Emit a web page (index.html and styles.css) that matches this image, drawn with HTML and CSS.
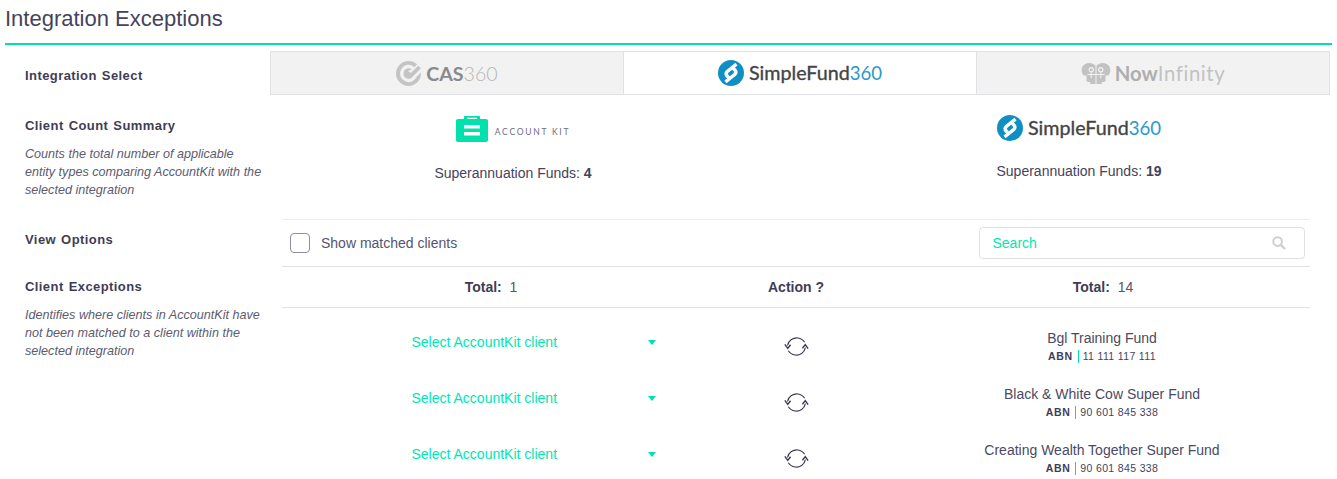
FILE: index.html
```html
<!DOCTYPE html>
<html lang="en">
<head>
<meta charset="utf-8">
<title>Integration Exceptions</title>
<link rel="stylesheet" href="styles.css">
</head>
<body>
<svg class="defs" width="0" height="0" aria-hidden="true">
  <symbol id="sf-mark" viewBox="0 0 26 26">
    <circle cx="13" cy="13" r="13" fill="#0f8fc4"/>
    <path d="M18.5 4.2 L9.3 11.4 Q7 13.8 9.3 16.3 L11.3 18.3" fill="none" stroke="#fff" stroke-width="3.4"/>
    <path d="M7.5 21.8 L16.7 14.6 Q19 12.2 16.7 9.7 L14.7 7.7" fill="none" stroke="#fff" stroke-width="3.4"/>
  </symbol>
  <symbol id="sync" viewBox="0 0 26 22">
    <path d="M3.6 9.8 C4.8 4.5 9.5 1.5 14.5 2.1 C17.5 2.5 20 4.2 21.6 6.6" fill="none" stroke="#3b3a55" stroke-width="1.2"/>
    <path d="M22.4 12.2 C21.2 17.5 16.5 20.5 11.5 19.9 C8.5 19.5 6 17.8 4.4 15.4" fill="none" stroke="#3b3a55" stroke-width="1.2"/>
    <path d="M0.8 8.8 L3.8 13 L6.8 9.2" fill="none" stroke="#3b3a55" stroke-width="1.5"/>
    <path d="M25.2 13.2 L22.2 9 L19.2 12.8" fill="none" stroke="#3b3a55" stroke-width="1.5"/>
  </symbol>
</svg>

<header class="page-head">
  <h1>Integration Exceptions</h1>
</header>

<main class="layout">
  <div class="side side-select"><h2>Integration Select</h2></div>
  <nav class="tabs">
    <a class="tab">
      <span class="logo logo-cas">
        <svg class="cas-mark" viewBox="0 0 26 26" aria-hidden="true">
          <path d="M13 0 A13 13 0 1 0 26 13 L26 12 L21.5 16.5 A9 9 0 1 1 13 4 C15.5 4 17.5 5 19 6.5 L22 3.5 C19.5 1.2 16.5 0 13 0 Z" fill="#c4c4c4"/>
          <path d="M13 7.5 A5.5 5.5 0 1 0 15.5 18 L19 14.5 L26 7.5 L23 5 L15.5 12.5 L12.5 10.5 L16.5 8.6 C15.5 7.9 14.3 7.5 13 7.5 Z" fill="#c4c4c4"/>
        </svg>
        <span class="cas-b">CAS</span><span class="cas-l">360</span>
      </span>
    </a>
    <a class="tab is-active">
      <span class="logo logo-sf">
        <svg class="sf-mark" aria-hidden="true"><use href="#sf-mark"/></svg>
        <span class="sf-text"><span class="sf-b">SimpleFund</span><span class="sf-l">360</span></span>
      </span>
    </a>
    <a class="tab">
      <span class="logo logo-ni">
        <svg class="ni-mark" viewBox="0 0 30 22" aria-hidden="true">
          <path d="M14.5 3 C13 1 10.5 0 8 0 C3.5 0 0 3 0 7.5 C0 10 1 11.5 2 13 L5 13 L5 18 C5 19 6 20 7 20 L9 20 L9 22 L14.5 22 Z" fill="#c2c2c2"/>
          <path d="M15.5 3 C17 1 19.5 0 22 0 C26.5 0 30 3 30 7.5 C30 10 29 11.5 28 13 L25 13 L25 18 C25 19 24 20 23 20 L21 20 L21 22 L15.5 22 Z" fill="#c2c2c2"/>
          <circle cx="10" cy="7" r="2.2" fill="none" stroke="#f2f2f2" stroke-width="1.2"/>
          <circle cx="20" cy="7" r="2.2" fill="none" stroke="#f2f2f2" stroke-width="1.2"/>
          <path d="M10 9 V16 M20 9 V16 M6 12 H24" stroke="#f2f2f2" stroke-width="1.1" fill="none"/>
        </svg>
        <span class="ni-b">Now</span><span class="ni-l">Infinity</span>
      </span>
    </a>
  </nav>

  <div class="side side-summary">
    <h2>Client Count Summary</h2>
    <p>Counts the total number of applicable entity types comparing AccountKit with the selected integration</p>
  </div>
  <section class="summary">
    <div class="count count-ak">
      <span class="logo logo-ak">
        <svg class="ak-mark" viewBox="0 0 32 26" aria-hidden="true">
          <path d="M8 3 V1 C8 .4 8.4 0 9 0 H23 C23.6 0 24 .4 24 1 V3 H30 C31.2 3 32 3.8 32 5 V24 C32 25.2 31.2 26 30 26 H2 C.8 26 0 25.2 0 24 V5 C0 3.8 .8 3 2 3 Z" fill="#00e1ac"/>
          <path d="M11 1.8 H21 V3 H11 Z M8 9 H24 V12.5 H8 Z M8 16 H24 V19.5 H8 Z" fill="#fff"/>
        </svg>
        <span class="ak-text">ACCOUNT KIT</span>
      </span>
      <p>Superannuation Funds: <b>4</b></p>
    </div>
    <div class="count count-sf">
      <span class="logo logo-sf">
        <svg class="sf-mark" aria-hidden="true"><use href="#sf-mark"/></svg>
        <span class="sf-text"><span class="sf-b">SimpleFund</span><span class="sf-l">360</span></span>
      </span>
      <p>Superannuation Funds: <b>19</b></p>
    </div>
  </section>

  <div class="side side-view"><h2>View Options</h2></div>
  <section class="view">
    <label class="check"><span class="box"></span>Show matched clients</label>
    <div class="search">
      <span class="search-text">Search</span>
      <svg class="search-icon" viewBox="0 0 14 14" aria-hidden="true">
        <circle cx="5.6" cy="5.6" r="4.3" fill="none" stroke="#cfcfcf" stroke-width="2"/>
        <path d="M8.8 8.8 L13 13" stroke="#cfcfcf" stroke-width="2.4"/>
      </svg>
    </div>
  </section>

  <div class="side side-exceptions">
    <h2>Client Exceptions</h2>
    <p>Identifies where clients in AccountKit have not been matched to a client within the selected integration</p>
  </div>
  <section class="table">
    <div class="row head">
      <div class="cell total"><b>Total:</b>&nbsp; 1</div>
      <div class="cell"><b>Action ?</b></div>
      <div class="cell total"><b>Total:</b>&nbsp; 14</div>
    </div>
    <div class="row item">
      <div class="cell select"><span>Select AccountKit client</span><i class="caret"></i></div>
      <div class="cell action"><svg class="sync"><use href="#sync"/></svg></div>
      <div class="cell client"><div class="name">Bgl Training Fund</div><div class="abn"><b>ABN</b><span>11 111 117 111</span></div></div>
    </div>
    <div class="row item">
      <div class="cell select"><span>Select AccountKit client</span><i class="caret"></i></div>
      <div class="cell action"><svg class="sync"><use href="#sync"/></svg></div>
      <div class="cell client"><div class="name">Black &amp; White Cow Super Fund</div><div class="abn"><b>ABN</b><span>90 601 845 338</span></div></div>
    </div>
    <div class="row item">
      <div class="cell select"><span>Select AccountKit client</span><i class="caret"></i></div>
      <div class="cell action"><svg class="sync"><use href="#sync"/></svg></div>
      <div class="cell client"><div class="name">Creating Wealth Together Super Fund</div><div class="abn"><b>ABN</b><span>90 601 845 338</span></div></div>
    </div>
  </section>
</main>
</body>
</html>
```

FILE: styles.css
```css
html, body { margin: 0; padding: 0; height: 479px; overflow: hidden; background: #fff; }
body { font-family: "Liberation Sans", Arial, sans-serif; font-size: 14px; color: #45435c; }
.defs { position: absolute; }
h1, h2, p { margin: 0; }

.page-head { margin: 0 5px; height: 43px; border-bottom: 2px solid #00dfae; }
h1 { font-size: 22px; font-weight: 400; line-height: 24px; padding-top: 7px; color: #45435c; }

.layout { display: grid; grid-template-columns: 270px 1060px; grid-template-rows: 44px 124px 48px 1fr; margin-top: 6px; }

.side { padding-left: 25px; padding-right: 8px; }
.side h2 { font-size: 13px; font-weight: 700; line-height: 16px; letter-spacing: .42px; word-spacing: 1px; color: #3f3d56; }
.side p { font-size: 12.6px; font-style: italic; line-height: 18px; color: #5c5b70; margin-top: 11px; }
.side-select { padding-top: 17px; }
.side-summary { padding-top: 23px; }
.side-view { padding-top: 13px; }
.side-exceptions { padding-top: 12px; }

.tabs { display: grid; grid-template-columns: 353px 353px 354px; }
.tab { display: flex; align-items: center; justify-content: center; background: #f2f2f2; border: 1px solid #e1e1e6; border-right: 0; box-sizing: border-box; }
.tab:last-child { border-right: 1px solid #e1e1e6; }
.tab.is-active { background: #fff; }

.logo { display: inline-flex; align-items: center; font-family: Lato, "Liberation Sans", sans-serif; white-space: nowrap; }
.cas-mark { width: 25px; height: 25px; margin-right: 5px; }
.cas-b { font-size: 19.6px; font-weight: 700; color: #8a8a8a; }
.cas-l { font-size: 19.6px; font-weight: 300; color: #b5b5b5; }
.sf-mark { width: 26px; height: 26px; margin-right: 5px; }
.sf-text { font-size: 19.7px; line-height: 26px; }
.sf-b { font-weight: 400; color: #444; -webkit-text-stroke: .35px #444; }
.sf-l { font-size: 18.6px; font-weight: 400; color: #2a9acb; }
.ni-mark { width: 30px; height: 21px; margin-right: 4px; }
.logo-ni { font-size: 20.3px; }
.ni-b { font-weight: 700; color: #aeaeae; }
.ni-l { font-weight: 400; color: #c2c2c2; letter-spacing: .6px; }

.summary { display: grid; grid-template-columns: 200px 200px; column-gap: 366px; padding-left: 143px; }
.count { display: flex; flex-direction: column; align-items: center; text-align: center; }
.count p { font-size: 14px; color: #45435c; }
.count-ak { padding-top: 21px; }
.count-ak p { margin-top: 23px; line-height: 16px; }
.count-sf { padding-top: 20px; }
.count-sf p { margin-top: 22px; line-height: 16px; }
.ak-mark { width: 32px; height: 26px; margin-right: 7px; }
.ak-text { font-size: 8.5px; letter-spacing: 1.75px; color: #6e6c83; font-weight: 400; padding-top: 5px; }

.view { margin: 0 20px 0 12px; display: flex; align-items: center; justify-content: space-between; border-top: 1px solid #ececec; border-bottom: 1px solid #e2e2e2; padding: 0 5px 0 8px; box-sizing: border-box; }
.check { display: flex; align-items: center; font-size: 14px; color: #565470; }
.box { width: 18px; height: 18px; border: 1px solid #8d8ba8; border-radius: 4px; margin-right: 11px; }
.search { width: 326px; height: 32px; border: 1px solid #e0e0e0; border-radius: 4px; box-sizing: border-box; display: flex; align-items: center; justify-content: space-between; padding: 0 18px 0 12.5px; }
.search-text { color: #00e6b0; font-size: 14px; }
.search-icon { width: 14px; height: 14px; }

.table { margin: 0 20px 0 12px; }
.row { display: grid; grid-template-columns: 416px 196px 416px; }
.cell { display: flex; align-items: center; justify-content: center; box-sizing: border-box; }
.head { height: 41px; border-bottom: 1px solid #e2e2e2; box-sizing: border-box; font-size: 14px; color: #565470; }
.head b { color: #3f3d56; font-size: 14px; }
.total { padding-left: 2px; }
.item { height: 56px; }
.select { justify-content: flex-start; padding: 12px 0 0 129.5px; color: #00e6b0; font-size: 14px; }
.select span { width: 236.5px; }
.caret { width: 0; height: 0; border: 4.5px solid transparent; border-top: 5px solid #00e1ac; border-bottom: 0; }
.action { padding-top: 20px; }
.sync { width: 25px; height: 21px; }
.client { flex-direction: column; padding-top: 19px; }
.name { font-size: 14px; line-height: 18px; color: #4b4a62; }
.abn { display: flex; align-items: center; font-size: 10.5px; line-height: 13px; letter-spacing: .35px; color: #45435c; margin-top: 3px; }
.abn span { border-left: 1px solid #00dfae; margin-left: 5px; padding-left: 4px; }
.abn b { letter-spacing: .6px; color: #3f3d56; }
```
